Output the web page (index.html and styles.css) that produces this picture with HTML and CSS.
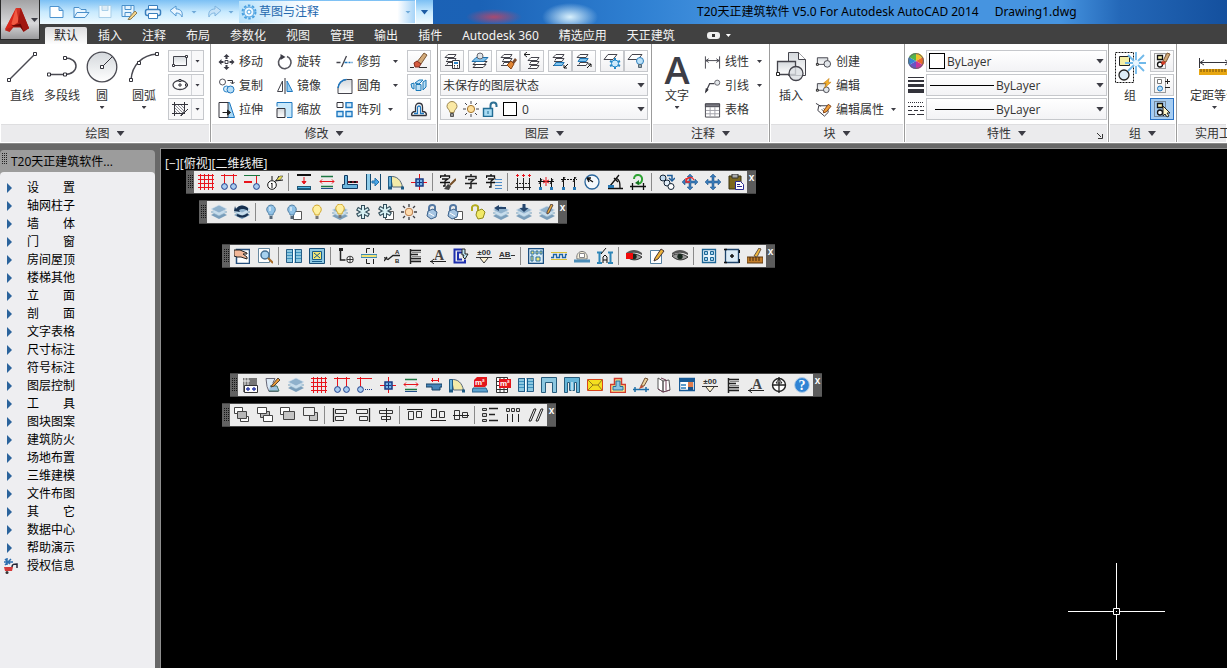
FILE: index.html
```html
<!DOCTYPE html>
<html lang="zh-CN">
<head>
<meta charset="utf-8">
<title>T20天正建筑软件 V5.0</title>
<link rel="stylesheet" href="styles.css">
</head>
<body>
<svg class="sprite" aria-hidden="true">
<defs>
<linearGradient id="gMetal" x1="0" y1="0" x2="0" y2="1"><stop offset="0" stop-color="#d4d8dc"/><stop offset="1" stop-color="#fff"/></linearGradient>
<linearGradient id="gBlue" x1="0" y1="0" x2="0" y2="1"><stop offset="0" stop-color="#d8effc"/><stop offset="1" stop-color="#8cc4e8"/></linearGradient>
<linearGradient id="gRed" x1="0" y1="0" x2="1" y2="1"><stop offset="0" stop-color="#ee4030"/><stop offset="1" stop-color="#8c0c08"/></linearGradient>
</defs>
<symbol id="dn" viewBox="0 0 7 4"><path d="M0 0h7L3.500 4z" fill="#3c3c44"/></symbol>
<!-- quick access -->
<symbol id="q-new" viewBox="0 0 18 16"><path d="M2 2.500h9l4 4v7H2zM11 2.500v4h4" fill="#fff" stroke="#4d93cf"/></symbol>
<symbol id="q-open" viewBox="0 0 18 16"><path d="M2 13.500V3.500h5l2 2h5v3M2 13.500l3-5h12l-4 5z" fill="#e9f6ff" stroke="#4a8fca"/></symbol>
<symbol id="q-save" viewBox="0 0 18 16"><path d="M3 1.500h12v12H3z" fill="#f4fbff" stroke="#a9cfe9"/><path d="M6 1.500h6v5H6z" fill="#dcebf5" stroke="#a9cfe9"/></symbol>
<symbol id="q-saveas" viewBox="0 0 18 16"><path d="M2 1.500h12v11H2zM5 1.500h6v4H5zM5 8.500h6v4H5z" fill="#e6f5ff" stroke="#4a90cb"/><path d="M9 14l6-7 2 2-6 6-3 1z" fill="#f4d58b" stroke="#8c7a52"/></symbol>
<symbol id="q-print" viewBox="0 0 18 16"><path d="M4.500 1.500h9v4h-9z" fill="#fff" stroke="#3a7fbd"/><rect x="1.500" y="5.500" width="15" height="6" rx="2" fill="#e4f2ff" stroke="#3a7fbd" stroke-width="1.500"/><path d="M4.500 9.500h9v5h-9z" fill="#fff" stroke="#3a7fbd"/></symbol>
<symbol id="q-undo" viewBox="0 0 18 16"><path d="M2 6.500L8 2v3c5 0 7 3 6 8-1-2-2-4-6-4v3z" fill="#e8f5ff" stroke="#5398d2"/></symbol>
<symbol id="q-redo" viewBox="0 0 18 16"><path d="M16 6.500L10 2v3c-5 0-7 3-6 8 1-2 2-4 6-4v3z" fill="#c4e1f7" stroke="#7fb4df"/></symbol>
<symbol id="q-gear" viewBox="0 0 16 16"><circle cx="8" cy="8" r="6.500" fill="none" stroke="#4aa0e0" stroke-width="2" stroke-dasharray="2.500 1.600"/><circle cx="8" cy="8" r="5" fill="#eaf6ff" stroke="#4aa0e0"/><circle cx="8" cy="8" r="2" fill="#fff" stroke="#4aa0e0"/></symbol>
<symbol id="logo" viewBox="0 0 28 30"><path d="M13 2h5l9 22-6 4-3-5H10l-4 5-5-2z" fill="url(#gRed)"/><path d="M13 2L1 25l9-3 5-5z" fill="#d8281c"/><path d="M13 2l3 15-6 4-2-2z" fill="#f15a42"/><path d="M18 2l-3 15 6 9 6-2z" fill="#a11610"/><path d="M8 21l10-2 3 8-4-5h-7z" fill="#6a0805"/></symbol>
<!-- draw -->
<symbol id="r-line" viewBox="0 0 32 32"><path d="M3 29L29 3" stroke="#4a4a52" stroke-width="1.500"/><path d="M1.500 27.500h3v3h-3zM27.500 1.500h3v3h-3z" fill="#fff" stroke="#33333b"/></symbol>
<symbol id="r-pline" viewBox="0 0 32 32"><path d="M3 23.500h16c7 0 11-4 11-8.500s-4-8-11-8" fill="none" stroke="#4a4a52" stroke-width="1.500"/><path d="M1.500 22h3v3h-3zM17.500 22h3v3h-3zM17.500 5.500h3v3h-3z" fill="#fff" stroke="#33333b"/></symbol>
<symbol id="r-circle" viewBox="0 0 32 32"><circle cx="16" cy="16" r="14.800" fill="url(#gMetal)" stroke="#4a4a52" stroke-width="1.300"/><path d="M16 16L26 6" stroke="#33333b"/><path d="M14.500 14.500h3v3h-3z" fill="#fff" stroke="#33333b"/></symbol>
<symbol id="r-arc" viewBox="0 0 32 32"><path d="M3 29C4 14 14 4 29 3" fill="none" stroke="#4a4a52" stroke-width="1.500"/><path d="M1.500 27.500h3v3h-3zM27.500 1.500h3v3h-3zM9.500 10.500h3v3h-3z" fill="#fff" stroke="#33333b"/></symbol>
<symbol id="r-rect" viewBox="0 0 18 16"><path d="M2.500 3.500h13v9h-13z" fill="url(#gMetal)" stroke="#44444c"/><path d="M1.500 11.500h2v2h-2zM14.500 2.500h2v2h-2z" fill="#fff" stroke="#33333b"/></symbol>
<symbol id="r-ellipse" viewBox="0 0 18 16"><ellipse cx="9" cy="8" rx="7" ry="4.500" fill="#fff" stroke="#44444c" stroke-width="1.300"/><path d="M9 6v4M7 8h4M8 2.500h2v2H8zM14.500 7h2v2h-2z" fill="#fff" stroke="#33333b"/></symbol>
<symbol id="r-hatch" viewBox="0 0 18 16"><path d="M4 4l8 8M7 4l6 6M10 4l3 3M4 7l6 6M4 10l3 3" stroke="#8a8a92"/><path d="M1 3.500h16M1 12.500h13M3.500 1v14M13.500 1v9l-4 5M17 8l-7 7" fill="none" stroke="#33333b"/></symbol>
<!-- modify -->
<symbol id="m-move" viewBox="0 0 16 16"><path d="M8 0l3 3H9v2H7V3H5zM8 16l-3-3h2v-2h2v2h2zM0 8l3-3v2h2v2H3v2zM16 8l-3 3V9h-2V7h2V5z" fill="#3c3c46"/><path d="M6.500 6.500h3v3h-3z" fill="none" stroke="#3c3c46"/></symbol>
<symbol id="m-rot" viewBox="0 0 16 16"><path d="M5 3A6.300 6.300 0 1 0 10.500 2.500" fill="none" stroke="#55555d" stroke-width="1.600"/><path d="M7 0v6l-5-3z" fill="#3c3c46" transform="rotate(180 5.500 3)"/></symbol>
<symbol id="m-trim" viewBox="0 0 16 16"><path d="M0 8.500h4M5 13l5-11" stroke="#44444c" stroke-width="1.300"/><path d="M8 8.500h3M12 8.500h2M15 8.500h1" stroke="#1f78c0" stroke-width="1.500"/></symbol>
<symbol id="m-copy" viewBox="0 0 16 16"><circle cx="4" cy="4" r="3" fill="#fff" stroke="#55555d"/><path d="M9 2.500h5v3M12 4l2 2 2-2" fill="none" stroke="#33333b"/><circle cx="8" cy="11" r="3" fill="#d5ecfb" stroke="#2f86c8"/><circle cx="12" cy="11.500" r="3.500" fill="#b8def7" stroke="#1f78c0"/></symbol>
<symbol id="m-mirror" viewBox="0 0 16 16"><path d="M6 3v10.500H1z" fill="#fff" stroke="#44444c"/><path d="M8.500 0v16" stroke="#33333b"/><path d="M10.500 3v10.500H16z" fill="#9cd0f2" stroke="#1f78c0"/></symbol>
<symbol id="m-fillet" viewBox="0 0 16 16"><path d="M1.500 15.500V10A9 9 0 0 1 10 1.500h5.500v14z" fill="url(#gMetal)" stroke="#44444c"/><path d="M1.500 10A9 9 0 0 1 10 1.500" fill="none" stroke="#1f78c0" stroke-width="1.500"/></symbol>
<symbol id="m-stretch" viewBox="0 0 16 16"><path d="M9 .500h2l5 15H9z" fill="#a9d8f5" stroke="#1f78c0"/><path d="M.500.500h9v15h-9z" fill="#fff" stroke="#33333b"/><path d="M4 10.500h5M9 8l3 2.500L9 13z" fill="#222" stroke="#222"/></symbol>
<symbol id="m-scale" viewBox="0 0 16 16"><path d="M.500 4.500v-4h15v15h-5" fill="#c8e8fb" stroke="#1f78c0"/><path d="M.500 6.500h8v9h-8z" fill="url(#gMetal)" stroke="#33333b"/></symbol>
<symbol id="m-array" viewBox="0 0 16 16"><path d="M.500.500h6v5h-6z" fill="#fff" stroke="#33333b"/><path d="M9.500.500h6v5h-6zM.500 9.500h6v5h-6zM9.500 9.500h6v5h-6z" fill="#d5edfc" stroke="#1f78c0" stroke-width="1.400"/></symbol>
<symbol id="m-erase" viewBox="0 0 18 16"><path d="M7 9l7-9 3 2-6 9z" fill="#d3aa79" stroke="#7b5836"/><path d="M4 10l3-2 4 3-2 3H5z" fill="#d65a3e" stroke="#832d20"/><path d="M0 14.500h4M9 14.500h8" stroke="#333"/></symbol>
<symbol id="m-explode" viewBox="0 0 18 16"><path d="M5 6l4-3h4L9 7zM6 7.500h5v6H6zM13 5l3-2v7l-3 3zM1 7l3-1v6l-2-1z" fill="#bde0f6" stroke="#1878b8"/></symbol>
<symbol id="m-offset" viewBox="0 0 18 16"><path d="M1.500 14.500h15M1.500 14.500c0-3 1-4 4-4V6c0-5 7-5 7 0v4.500c3 0 4 1 4 4" fill="#fff" stroke="#33333b" stroke-width="1.300"/><path d="M4 12.500h3.500V6.500c0-2 3-2 3 0v6H14" fill="none" stroke="#1f78c0" stroke-width="1.300"/></symbol>
<!-- layers -->
<symbol id="l-st" viewBox="0 0 18 18"><path d="M5 2.500h8l-2 3H2zM4 8.500l1-2h8l-2 3H3M4 12.500l1-2h8l-2 3H2" fill="#fff" stroke="#44444c"/></symbol>
<symbol id="l-prop" viewBox="0 0 18 18"><use href="#l-st"/><path d="M9.500 8.500h7v8h-7z" fill="#fff" stroke="#33333b"/><path d="M11 10h4v2h-4z" fill="#2f86c8"/><path d="M11 13.500h1M14 13.500h1M11 15h1M14 15h1" stroke="#333"/></symbol>
<symbol id="l-cur" viewBox="0 0 18 18"><path d="M5 12.500h10l-3 3H2zM5 9.500h11l-3 3H2z" fill="#fff" stroke="#33333b"/><path d="M5 5.500h12l-4 4H1z" fill="#7fc0ea" stroke="#1f6faa"/><circle cx="9" cy="4" r="3" fill="#dfe4e8" stroke="#66666e"/></symbol>
<symbol id="l-match" viewBox="0 0 18 18"><use href="#l-st"/><path d="M13 10l3-4 2 2-3 4z" fill="#7b4a2c"/><path d="M8 13l4-4 3 3-3 5z" fill="#df8433" stroke="#8b4716"/></symbol>
<symbol id="l-prev" viewBox="0 0 18 18"><use href="#l-st" x="3" y="3"/><path d="M1 2.500h6M4 0L1 2.500 4 5" fill="none" stroke="#222"/></symbol>
<symbol id="l-iso" viewBox="0 0 18 18"><use href="#l-st"/><path d="M3 13.500l2-3h8l-2 3z" fill="#81c3ec" stroke="#1f78b8"/><path d="M17 12l-4 4M13 13v3h3" fill="none" stroke="#111"/></symbol>
<symbol id="l-uniso" viewBox="0 0 18 18"><use href="#l-st"/><path d="M3 9.500l2-3h8l-2 3z" fill="#81c3ec" stroke="#1f78b8"/><path d="M12 16l4-4M13 12h3v3" fill="none" stroke="#111"/></symbol>
<symbol id="l-frz" viewBox="0 0 18 18"><path d="M5 2.500h9l-4 5H1z" fill="#fff" stroke="#44444c"/><path d="M12 6v11M7 9l10 5M17 9L7 14" stroke="#1f86c8" stroke-width="2"/><circle cx="12" cy="11.500" r="3.500" fill="#ceeafb" stroke="#1f86c8"/></symbol>
<symbol id="l-off" viewBox="0 0 18 18"><path d="M5 2.500h10l-4 5H1z" fill="#fff" stroke="#44444c"/><circle cx="13" cy="9" r="3.500" fill="#bce2fa" stroke="#2f80bc"/><path d="M11.500 12.500h3v3h-3z" fill="#9aa" stroke="#567"/></symbol>
<symbol id="l-bulb" viewBox="0 0 16 16"><path d="M8 .500a5 5 0 0 1 5 5c0 2-3 3.500-3 6H6c0-2.500-3-4-3-6a5 5 0 0 1 5-5z" fill="#fbe9a4" stroke="#9b8550"/><path d="M6.500 12.500h3v3h-3z" fill="#999" stroke="#555"/></symbol>
<symbol id="l-sun" viewBox="0 0 16 16"><path d="M8 0v3M8 13v3M0 8h3M13 8h3M2 2l2 2M12 12l2 2M14 2l-2 2M4 12l-2 2" stroke="#44444c"/><circle cx="8" cy="8" r="3.600" fill="#ffdf9b" stroke="#a4752d"/></symbol>
<symbol id="l-lock" viewBox="0 0 16 16"><path d="M8.500 7V4.500c0-4 6-4 6 0V6" fill="none" stroke="#2d6f93" stroke-width="2"/><path d="M1.500 7.500h9v8h-9z" fill="#a9dbf3" stroke="#216c94" stroke-width="1.400"/><path d="M6 10v3" stroke="#216c94"/></symbol>
<!-- annotation, block -->
<symbol id="a-lin" viewBox="0 0 18 16"><path d="M1.500 2v13M16.500 2v13M2 6.500h14M5 4.500L2 6.500l3 2M13 4.500l3 2-3 2" fill="none" stroke="#44444c"/></symbol>
<symbol id="a-lead" viewBox="0 0 18 16"><path d="M2 14L6 5.500h5" fill="none" stroke="#44444c" stroke-width="1.300"/><path d="M1 16l1-6 3 2z" fill="#33333b"/><circle cx="14" cy="4.500" r="2.700" fill="#e3e7ea" stroke="#66666e"/></symbol>
<symbol id="a-table" viewBox="0 0 18 16"><path d="M1.500 1.500h15v14h-15z" fill="#fff" stroke="#44444c"/><path d="M1.500 1.500h15v3h-15z" fill="#7a7a82" stroke="#44444c"/><path d="M2 8.500h14M2 12h14M6.500 5v10M11.500 5v10" stroke="#a0a0a8"/></symbol>
<symbol id="b-ins" viewBox="0 0 32 32"><path d="M13.500 1.500h10l7 7v16h-17z" fill="url(#gMetal)" stroke="#44444c"/><path d="M23.500 1.500v7h7" fill="#fff" stroke="#44444c"/><path d="M2.500 10.500h18v13h-18z" fill="url(#gMetal)" stroke="#44444c" stroke-width="1.300"/><circle cx="21" cy="22.500" r="7" fill="#dce0e4" fill-opacity=".8" stroke="#44444c" stroke-width="1.300"/><path d="M1.500 21.500h3v3h-3z" fill="#fff" stroke="#222"/></symbol>
<symbol id="b-new" viewBox="0 0 18 16"><path d="M2.500 3.500h11v7h-11z" fill="url(#gMetal)" stroke="#44444c"/><circle cx="13" cy="10" r="3.500" fill="#e2e6ea" stroke="#44444c"/><path d="M1.500 9.500h2v2h-2z" fill="#fff" stroke="#222"/></symbol>
<symbol id="b-edit" viewBox="0 0 18 16"><path d="M2.500 5.500h9v7h-9z" fill="url(#gMetal)" stroke="#44444c"/><circle cx="12" cy="12" r="3" fill="#e2e6ea" stroke="#44444c"/><path d="M1.500 11.500h2v2h-2z" fill="#fff" stroke="#222"/><path d="M15 0l-6 5h3l-2 5 7-6h-3z" fill="#f7b32b" stroke="#c07a14" stroke-width=".6"/></symbol>
<symbol id="b-attr" viewBox="0 0 18 16"><path d="M1 1l5 3M4 3.500h9l1 7-4 4-7-6z" fill="#fff" stroke="#33333b"/><path d="M7 7l3 4M9 6l3 4" stroke="#777"/><path d="M9 9l5-7 3 2-5 6-3 1z" fill="#f0a03a" stroke="#7c3f18"/></symbol>
<!-- properties, groups, utilities -->
<symbol id="p-wheel" viewBox="0 0 16 16"><path d="M8 8V0a8 8 0 0 1 7 4z" fill="#f0c22c"/><path d="M8 8l7-4a8 8 0 0 1 0 8z" fill="#ea6b2a"/><path d="M8 8l7 4a8 8 0 0 1-7 4z" fill="#c8379a"/><path d="M8 8v8a8 8 0 0 1-7-4z" fill="#6a52c4"/><path d="M8 8l-7 4a8 8 0 0 1 0-8z" fill="#3487d4"/><path d="M8 8L1 4a8 8 0 0 1 7-4z" fill="#55b748"/><circle cx="8" cy="8" r="7.400" fill="none" stroke="#666"/></symbol>
<symbol id="p-weight" viewBox="0 0 16 16"><path d="M0 .500h16" stroke="#33333b"/><path d="M0 4h16" stroke="#33333b" stroke-width="2"/><path d="M0 8.500h16" stroke="#33333b" stroke-width="3"/><path d="M0 14h16" stroke="#33333b" stroke-width="4"/></symbol>
<symbol id="p-type" viewBox="0 0 16 16"><path d="M0 1.500h16" stroke="#33333b" stroke-dasharray="1 1"/><path d="M0 5.500h16" stroke="#33333b" stroke-dasharray="2 1"/><path d="M0 9.500h16" stroke="#33333b" stroke-dasharray="4 2"/><path d="M0 13.500h16" stroke="#33333b" stroke-dasharray="7 2"/></symbol>
<symbol id="g-group" viewBox="0 0 32 32"><path d="M1.500 1.500h18v30h-18z" fill="#fff" stroke="#111" stroke-dasharray="2 1"/><path d="M5.500 5.500h10v9h-10z" fill="#f6efa4" stroke="#222"/><path d="M22 1v22M11 12h21M14 4l16 16M30 4L14 20" stroke="#70b9ea" stroke-width="1.800"/><circle cx="22" cy="12" r="3" fill="#e8f6ff"/><circle cx="10" cy="24" r="5" fill="#dcecf8" stroke="#222" stroke-width="1.300"/></symbol>
<symbol id="g-box" viewBox="0 0 18 18"><path d="M1.500 1.500h11v15h-11z" fill="none" stroke="#444" stroke-dasharray="1 1"/><path d="M4.500 3.500h5v4h-5z" fill="#f7f1ae" stroke="#111" stroke-width="1.300"/><circle cx="7" cy="12.500" r="2.500" fill="#fff" stroke="#111" stroke-width="1.300"/></symbol>
<symbol id="g-un" viewBox="0 0 18 18"><use href="#g-box"/><path d="M10 9l4-8 3 1-4 8z" fill="#d3aa79" stroke="#7b5836"/><path d="M9 9l4 1-2 3-3-1z" fill="#d03a24"/></symbol>
<symbol id="g-edit" viewBox="0 0 18 18"><path d="M1.500 1.500h11v15h-11z" fill="none" stroke="#444" stroke-dasharray="1 1"/><path d="M4.500 3.500h4v4h-4z" fill="#fff" stroke="#777"/><circle cx="7" cy="12.500" r="2.500" fill="#b9dff7" stroke="#1f78c0"/><path d="M12 5.500h5M14.500 3v5M12 11.500h5" stroke="#222"/></symbol>
<symbol id="g-sel" viewBox="0 0 18 18"><use href="#g-box"/><path d="M10 6v10l2-2 2 3 2-1-2-3h3z" fill="#fff7c9" stroke="#222"/></symbol>
<symbol id="u-meas" viewBox="0 0 64 32"><path d="M.500 7v10M30.500 7v10M1 11.500h29M5 9l-4 2.500L5 14M26 9l4 2.500-4 2.500" fill="none" stroke="#33333b"/><path d="M0 18h32v6H0z" fill="#e8a712"/><path d="M2 18v3M5 18v3M8 18v3M11 18v3M14 18v3M17 18v3M20 18v3M23 18v3M26 18v3M29 18v3" stroke="#744d05"/></symbol>
<!-- floating toolbars -->
<symbol id="t-grid" viewBox="0 0 16 16"><path d="M2.500 0v16M6.500 0v16M10.500 0v16M14.500 0v16M0 1.500h16M0 5.500h16M0 9.500h16M0 13.500h16" stroke="#e8141c"/></symbol>
<symbol id="t-ax2" viewBox="0 0 16 16"><path d="M0 1.500h16" stroke="#e8141c"/><path d="M3.500 0v10M12.500 0v10" stroke="#e8141c"/><circle cx="3.500" cy="12.500" r="2.900" fill="#a8ccf0" stroke="#20408c"/><circle cx="12.500" cy="12.500" r="2.900" fill="#a8ccf0" stroke="#20408c"/></symbol>
<symbol id="t-ax1" viewBox="0 0 16 16"><path d="M0 1.500h16" stroke="#1c7840"/><path d="M12.500 2v8" stroke="#e8141c"/><path d="M0 8h8" stroke="#e8141c" stroke-width="2"/><circle cx="12.500" cy="12.500" r="2.900" fill="#a8ccf0" stroke="#20408c"/></symbol>
<symbol id="t-axd" viewBox="0 0 16 16"><path d="M0 1.500h15M3.500 0v10" stroke="#e8141c"/><circle cx="3.500" cy="12.500" r="2.900" fill="#a8ccf0" stroke="#20408c"/><path d="M8 12.500h8" stroke="#20408c" stroke-dasharray="1 1"/></symbol>
<symbol id="t-axn" viewBox="0 0 16 16"><circle cx="5" cy="11" r="4.300" fill="#fff" stroke="#111"/><path d="M5 9v5M4 10l1-1M5 6V2M8 7l8-1M9 7l3-5" stroke="#111"/><path d="M9 6l4-4h3l-3 4z" fill="#e9df52" stroke="#444" stroke-width=".6"/></symbol>
<symbol id="t-w1" viewBox="0 0 16 16"><path d="M1 1h14" stroke="#111" stroke-width="2"/><path d="M1 14h14" stroke="#1e5878" stroke-width="4"/><path d="M2 13.500h12" stroke="#52b4e4"/><path d="M8 3v5M6 7.500h4L8 10z" fill="#e8141c" stroke="#e8141c"/></symbol>
<symbol id="t-w2" viewBox="0 0 16 16"><path d="M2 2.500h12M2 12.500h12" stroke="#1f7844" stroke-width="1.500"/><path d="M2 14.500h12" stroke="#234f8c"/><path d="M1 7.500h14M3 5.500l-2 2 2 2M13 5.500l2 2-2 2" fill="none" stroke="#e8141c"/></symbol>
<symbol id="t-w3" viewBox="0 0 16 16"><path d="M.500 14.500h15v-4H5.500v-9h-3v9h-2z" fill="#6bb5dd" stroke="#123b62"/><path d="M6 8h10" stroke="#111" stroke-width="2"/><path d="M6 8h10" stroke="#d24" stroke-dasharray="2 2"/></symbol>
<symbol id="t-w4" viewBox="0 0 16 16"><path d="M1 0v16h4V0z" fill="#8fcdea"/><path d="M1.500 0v16M5.500 0v16M15.500 0v16" stroke="#184a6d"/><path d="M7 7h3V4l4 4-4 4V9H7z" fill="#4aa5e6" stroke="#2473ab"/></symbol>
<symbol id="t-fan" viewBox="0 0 16 16"><path d="M2.500 2.500C9 2 13 6 14.500 13H4.500z" fill="#f4eba8" stroke="#567"/><path d="M.500 2.500h3v11h-3z" fill="#69b1db" stroke="#1d5b84"/><path d="M0 14h4M13 14h3" stroke="#1d5b84" stroke-width="3"/></symbol>
<symbol id="t-col" viewBox="0 0 16 16"><path d="M8.500 0v16M0 8.500h16" stroke="#e8141c"/><path d="M5 5h7v7H5z" fill="#79b8ea" stroke="#193882" stroke-width="1.500"/><path d="M8.500 6v5M6 8.500h5" stroke="#193882"/></symbol>
<symbol id="t-zi" viewBox="0 0 16 16"><path d="M8 0v2M3 5V2.500h10V5M5 5.500h6L8 8v6H6M2 9.500h12" fill="none" stroke="#222" stroke-width="1.500"/></symbol>
<symbol id="t-zib" viewBox="0 0 16 16"><path d="M5 0v2M.500 4V2h9v2M2 5h6L5 7v5H3M0 8.500h10" fill="none" stroke="#111" stroke-width="1.300"/><path d="M16 5l-6 6" stroke="#765028" stroke-width="2"/><path d="M4 15l4-5 3 2-2 4z" fill="#444"/></symbol>
<symbol id="t-zil" viewBox="0 0 16 16"><path d="M5 0v2M.500 4V2h8v2M2 5h6L5 7v6H3M0 8.500h9" fill="none" stroke="#111" stroke-width="1.300"/><path d="M9 5.500h7M9 8.500h7M9 11.500h7M9 14.500h7" stroke="#4d8cc9"/></symbol>
<symbol id="t-d1" viewBox="0 0 16 16"><path d="M0 13.500h16M2.500 4v12M8.500 4v12M14.500 4v12" stroke="#222"/><path d="M1 9.500h15" stroke="#222" stroke-dasharray="2 1"/><path d="M1 1.500h3M7 1.500h3M13 1.500h3M2.500 0v3M8.500 0v3M14.500 0v3" stroke="#e8141c"/></symbol>
<symbol id="t-d2" viewBox="0 0 16 16"><path d="M0 7.500h16M2.500 4v9M13.500 4v9M1 10l3-5M12 10l3-5" stroke="#111"/><path d="M8 3v9M5 6l3 1.500L5 9M11 6L8 7.500 11 9" fill="none" stroke="#e8141c"/><path d="M1 13h3v3H1zM12 13h3v3h-3z" fill="#2a7bb8"/></symbol>
<symbol id="t-d3" viewBox="0 0 16 16"><path d="M2.500 3v10M13.500 3v10M1 8l3-5M12 8l3-5" stroke="#111"/><path d="M0 5.500h16" stroke="#111" stroke-dasharray="2 1"/><path d="M1 13h3v3H1zM12 13h3v3h-3z" fill="#2a7bb8"/></symbol>
<symbol id="t-circ" viewBox="0 0 16 16"><circle cx="8" cy="8" r="7" fill="#f4f8fb" stroke="#2a669c" stroke-width="1.300"/><path d="M3 4l6 4M3 4h4M3 4l2 4" stroke="#111" stroke-width="1.300"/></symbol>
<symbol id="t-ang" viewBox="0 0 16 16"><path d="M1 14.500h15M3 12L12 1M9 4c4 2 4 5 4 10M7 4l4 4" fill="none" stroke="#111" stroke-width="1.300"/><path d="M1 11h6v3H1z" fill="#2978b2"/></symbol>
<symbol id="t-turn" viewBox="0 0 16 16"><path d="M0 12.500h16M2.500 9v7M13.500 9v7" stroke="#111" stroke-width="1.300"/><path d="M4 5C4-1 13 0 12 6c0 3-3 4-5 3" fill="none" stroke="#2fa334" stroke-width="2"/><path d="M9 6v5L5 9z" fill="#167321"/></symbol>
<symbol id="t-copy" viewBox="0 0 16 16"><circle cx="4" cy="4" r="3" fill="#c2daee" stroke="#123"/><circle cx="8" cy="9" r="3" fill="#e3eef8" stroke="#123"/><circle cx="12" cy="12.500" r="3" fill="#fff" stroke="#123"/><path d="M8 1.500h5v4M10 4l3 3 3-3" fill="none" stroke="#1d5c99" stroke-width="1.500"/></symbol>
<symbol id="t-move" viewBox="0 0 16 16"><path d="M8 0l3 3H9v4h4V5l3 3-3 3V9H9v4h2l-3 3-3-3h2V9H3v2L0 8l3-3v2h4V3H5z" fill="#387bb8" stroke="#1b4e84" stroke-width=".5"/></symbol>
<symbol id="t-mover" viewBox="0 0 16 16"><use href="#t-move"/><path d="M4 7c1-4 6-5 8-1M4 4v4h4" fill="none" stroke="#ec2a2a" stroke-width="1.300"/></symbol>
<symbol id="t-paste" viewBox="0 0 16 16"><path d="M1 2h12v13H1z" fill="#7c6820" stroke="#38300f"/><path d="M4 0h6v4H4z" fill="#aaa" stroke="#333"/><path d="M7.500 7.500h5l3 3v5h-8z" fill="#fff" stroke="#2a2a92"/><path d="M9 10.500h3M9 12.500h5" stroke="#2a2a92"/></symbol>
<symbol id="t-lay" viewBox="0 0 16 16"><path d="M0 11l8-4 8 4-8 4z" fill="#7a9ebb"/><path d="M0 8l8-4 8 4-8 4z" fill="#c5dcec" stroke="#88a8c0" stroke-width=".6"/><path d="M0 5l8-4 8 4-8 4z" fill="#8fb1cc" stroke="#dceaf4" stroke-width=".6"/></symbol>
<symbol id="t-layb" viewBox="0 0 16 16"><use href="#t-lay"/><path d="M2 5c3-5 9-4 12-1v3C10 4 7 5 5 6l1 2-6-1 1-5z" fill="#17304f"/><path d="M3 11c4 2 8 2 11-1" fill="none" stroke="#17304f" stroke-width="2"/></symbol>
<symbol id="t-bb" viewBox="0 0 16 16"><path d="M8 1a4.500 4.500 0 0 1 4 6c-1 2-2 2-2 4H6c0-2-1-2-2-4a4.500 4.500 0 0 1 4-6z" fill="#91c2e6" stroke="#5381a6"/><path d="M7 3v4" stroke="#fff"/><path d="M6.500 12h3v3h-3z" fill="#567"/></symbol>
<symbol id="t-sq" viewBox="0 0 16 16"><path d="M7.500 7.500h8v8h-8z" fill="#fff" stroke="#555"/></symbol>
<symbol id="t-bbs" viewBox="0 0 16 16"><use href="#t-sq"/><use href="#t-bb" x="-2"/></symbol>
<symbol id="t-by" viewBox="0 0 16 16"><path d="M8 1a4.500 4.500 0 0 1 4 6c-1 2-2 2-2 4H6c0-2-1-2-2-4a4.500 4.500 0 0 1 4-6z" fill="#fff0a0" stroke="#d1a72d"/><path d="M6.500 12h3v3h-3z" fill="#777"/></symbol>
<symbol id="t-byl" viewBox="0 0 16 16"><use href="#t-lay" y="1"/><use href="#t-by" y="-1"/></symbol>
<symbol id="t-flk" viewBox="0 0 16 16"><path d="M8 1v14M2 4.500l12 7M14 4.500l-12 7" stroke="#344f5c" stroke-width="4"/><path d="M8 2v12M3 5l10 6M13 5L3 11" stroke="#d9f2f5" stroke-width="2"/></symbol>
<symbol id="t-flks" viewBox="0 0 16 16"><use href="#t-sq"/><use href="#t-flk" x="-1" y="-1"/></symbol>
<symbol id="t-sun" viewBox="0 0 16 16"><path d="M8 0v3M8 13v3M0 8h3M13 8h3M2 2l2 2M12 12l2 2M14 2l-2 2M4 12l-2 2" stroke="#3f3f44" stroke-width="1.300"/><circle cx="8" cy="8" r="3.800" fill="#ffdcae" stroke="#b77a4a"/></symbol>
<symbol id="t-lk" viewBox="0 0 16 16"><path d="M5 8V4c0-4 7-4 6 0v4" fill="none" stroke="#5478a2" stroke-width="2"/><path d="M4 7l5-2 4 3-1 5-5 2-4-3z" fill="#a6c5e2" stroke="#3c618a"/><path d="M5 9l5 3" stroke="#fff"/></symbol>
<symbol id="t-lks" viewBox="0 0 16 16"><use href="#t-sq"/><use href="#t-lk" x="-2"/></symbol>
<symbol id="t-ul" viewBox="0 0 16 16"><path d="M2 7V3c1-3 7-2 6 1v4" fill="none" stroke="#b3ab1f" stroke-width="2"/><path d="M7 7l5-2 3 3-2 6-5 1-2-4z" fill="#f1e968" stroke="#918a1b"/></symbol>
<symbol id="t-ll" viewBox="0 0 16 16"><use href="#t-lay" y="1"/><path d="M1 4l5-3v2h7v2H6v2z" fill="#25456c"/></symbol>
<symbol id="t-ld" viewBox="0 0 16 16"><use href="#t-lay" y="1"/><path d="M6.500 0h3v4h3L8 8 3.500 4h3z" fill="#25456c"/></symbol>
<symbol id="t-lp" viewBox="0 0 16 16"><use href="#t-lay" y="1"/><path d="M8 8l4-8 2 1-4 8-2 1z" fill="#eeb13c" stroke="#544"/></symbol>
<symbol id="t-hand" viewBox="0 0 16 16"><path d="M2.500 1.500h13v14h-13z" fill="#fff" stroke="#26507e" stroke-width="1.500"/><path d="M0 2h6l7 3v1H9l4 3v2L7 9H3L0 8z" fill="#f2b899" stroke="#222"/></symbol>
<symbol id="t-find" viewBox="0 0 16 16"><path d="M1.500.500h11v14h-11z" fill="#fff" stroke="#6688a0"/><circle cx="8" cy="7" r="4" fill="#a6d1ef" stroke="#456f92" stroke-width="1.500"/><path d="M11 10l5 5" stroke="#a86b25" stroke-width="2"/></symbol>
<symbol id="t-dr2" viewBox="0 0 16 16"><path d="M.500 1.500h15v13H.500z" fill="#8cc7e0" stroke="#285f86"/><path d="M7.500 1v14" stroke="#fff" stroke-width="2"/><path d="M6.500 1v14M9.500 1v14" stroke="#185d8c"/><path d="M1 4.500h5M10 4.500h5M1 7.500h5M10 7.500h5M1 10.500h5M10 10.500h5" stroke="#3f93bf"/></symbol>
<symbol id="t-elev" viewBox="0 0 16 16"><path d="M.500.500h15v15H.500z" fill="#8ec9e2" stroke="#174e77"/><path d="M3.500 3.500h9v8h-9z" fill="#f2e574" stroke="#185d8c"/><path d="M5 5l6 5M11 5l-6 5M3 13.500h10" stroke="#185d8c"/></symbol>
<symbol id="t-node" viewBox="0 0 16 16"><path d="M2.500 3v9h5" fill="none" stroke="#222" stroke-width="1.500"/><path d="M1 0h4v3H1z" fill="#222"/><circle cx="12" cy="11.500" r="3.300" fill="#fff" stroke="#333"/><path d="M9 11.500h6M12 9v5" stroke="#333"/></symbol>
<symbol id="t-cut" viewBox="0 0 16 16"><path d="M0 6.500h16v3H0z" fill="#f1e274" stroke="#3b87b4"/><path d="M5.500 5V.500H9M12.500 0v5M5.500 11v4.500H9M12.500 11v5" fill="none" stroke="#222"/></symbol>
<symbol id="t-rows" viewBox="0 0 16 16"><path d="M3.500 1v15M3 2.500h11M3 6.500h8M3 10.500h11M3 13.500h11" stroke="#222" stroke-width="1.500"/><path d="M5 4.500h9M5 8.500h9M5 12h9" stroke="#888"/></symbol>
<symbol id="t-imp" viewBox="0 0 16 16"><path d="M9 1.500H1.500v13H12v-3M9 4.500H5v7h4" fill="none" stroke="#1d2fae" stroke-width="2"/><path d="M9 1h3v5h3l-3 5-2-2 1-2H9z" fill="#bce6f4" stroke="#222"/></symbol>
<symbol id="t-plan" viewBox="0 0 16 16"><path d="M.500.500h15v15H.500z" fill="#d8ebf5" stroke="#1a4e80" stroke-width="1.500"/><path d="M3 3h3v3H3zM8 3h2v3H8zM12 3h2v3h-2zM3 8h2v5H3zM8 9h4v4H8z" fill="#f3e77a" stroke="#246ca3"/></symbol>
<symbol id="t-wave" viewBox="0 0 16 16"><path d="M0 4.500h16M0 11.500h16" stroke="#d7c13c"/><path d="M0 9.500h2.500v-3h3v3h3v-3h3v3h3v-3H16" fill="none" stroke="#1c64a8" stroke-width="1.300"/></symbol>
<symbol id="t-basin" viewBox="0 0 16 16"><path d="M3 11C1 1 15 1 13 11z" fill="#f6f1dc" stroke="#777"/><path d="M5.500 5.500h5v4h-5z" fill="#fff" stroke="#888"/><path d="M0 13h16" stroke="#4b8db8" stroke-width="3"/></symbol>
<symbol id="t-sec" viewBox="0 0 16 16"><path d="M2.500 16V5M0 4.500h5M13.500 16V5M11 4.500h5M0 15h5M11 15h5" stroke="#2e86b8" stroke-width="2"/><path d="M9 0L4 6" stroke="#111"/><path d="M6 15V9l2-2 2 2v6M6 12h4" fill="none" stroke="#111"/></symbol>
<symbol id="t-eye" viewBox="0 0 16 16"><path d="M0 5c5-4 11-4 16 0v2C10 4 6 4 0 7z" fill="#555"/><path d="M0 8c4-3 10-3 16 1-5 4-11 4-16-1z" fill="#999" stroke="#333"/><circle cx="8" cy="8.500" r="2.700" fill="#16261c"/></symbol>
<symbol id="t-reye" viewBox="0 0 16 16"><use href="#t-eye"/><path d="M0 5h7v6H0z" fill="#f00a0a"/></symbol>
<symbol id="t-note" viewBox="0 0 16 16"><path d="M1.500 2.500h11v13h-11z" fill="#fff" stroke="#5580a0"/><path d="M6 10l6-9 3 2-6 8-4 2z" fill="#edb33b" stroke="#433"/></symbol>
<symbol id="t-four" viewBox="0 0 16 16"><path d="M1.500 1.500h13v13h-13z" fill="#e4f2fa" stroke="#1d6696" stroke-width="1.300"/><path d="M3.500 3.500h3v3h-3zM9.500 3.500h3v3h-3zM3.500 9.500h3v3h-3zM9.500 9.500h3v3h-3z" fill="#a7d6ef" stroke="#1d6696"/></symbol>
<symbol id="t-frm" viewBox="0 0 16 16"><path d="M1.500 1.500h13v13h-13z" fill="#dcecf7" stroke="#1f456c" stroke-width="1.300"/><path d="M0 1.500h3M0 14.500h3M15.500 2v3M15.500 11v4M8 6v4M6 8h4" stroke="#111" stroke-width="1.500"/></symbol>
<symbol id="t-rul" viewBox="0 0 16 16"><path d="M0 9h16v6H0z" fill="#c17d2b" stroke="#5f3b12"/><path d="M3 9v4M6 9v4M9 9v4M12 9v4" stroke="#472b0d"/><path d="M7 8l5-8 2 1-4 8z" fill="#f1b83d" stroke="#654"/></symbol>
<symbol id="t-wall" viewBox="0 0 16 16"><path d="M1 1h14v7H7v7H1z" fill="#777"/><path d="M3 1v14M6 1v14M0 4h8" stroke="#eee"/><path d="M2.500 8.500h13v7h-13z" fill="#fff" stroke="#333"/><path d="M4 12h4M6 10v4M10 12h4M12 10v4" stroke="#2938a5" stroke-width="1.300"/></symbol>
<symbol id="t-doc" viewBox="0 0 16 16"><path d="M1 1.500h9l-2 4 5 9H4l-2-5z" fill="#dceaf6" stroke="#667"/><path d="M4 14h10l-2-5H5" fill="#9dc2df" stroke="#476"/><path d="M7 8l6-7 2 2-6 6-3 1z" fill="#e99a35" stroke="#543"/></symbol>
<symbol id="t-beam" viewBox="0 0 16 16"><path d="M0 7h16v3h-2v3H6v-3H0z" fill="#4685b8" stroke="#174064"/><path d="M5 3.500h8M6.500 1v4M12.500 1v4" stroke="#e8141c"/></symbol>
<symbol id="t-dr3" viewBox="0 0 16 16"><path d="M.500.500h15v15h-4v-10h-7v10h-4z" fill="#8cc7e0" stroke="#275c7c"/></symbol>
<symbol id="t-dr4" viewBox="0 0 16 16"><path d="M.500.500h15v15h-3v-10h-2v8h-5v-8h-2v10h-3z" fill="#65b5d8" stroke="#275c7c"/><path d="M8 5v9" stroke="#fff"/></symbol>
<symbol id="t-roof" viewBox="0 0 16 16"><path d="M.500 2.500h15v11H.500z" fill="#f4df1f" stroke="#d8461c"/><path d="M1 3l5 5h5l4-5M1 13l5-5M15 13l-4-5" fill="none" stroke="#94781b"/></symbol>
<symbol id="t-stair" viewBox="0 0 16 16"><path d="M.500 7.500h4v-6h7v6h4v8H.500z" fill="#f7e88c" stroke="#d33a2d" stroke-width="1.500"/><path d="M3 13V9.500h3V4h4v5.500h3V13z" fill="#8dc4e1" stroke="#246e9d"/></symbol>
<symbol id="t-pd" viewBox="0 0 16 16"><path d="M0 12.500h16M2 10v5M13 10v5" stroke="#1e6fa8" stroke-width="1.500"/><path d="M8 9l4-8 3 1-4 7z" fill="#ecd39e" stroke="#6f4f35"/><path d="M6 12l2-4 3 2z" fill="#b94b2f"/></symbol>
<symbol id="t-book" viewBox="0 0 16 16"><path d="M2 1l5 3v11l-5-3zM13 3L7 4v11l7-2z" fill="#fff" stroke="#555"/><path d="M2 12l5 3 7-2M5 1l5 2v10" fill="none" stroke="#724158"/></symbol>
<symbol id="t-mon" viewBox="0 0 16 16"><path d="M.500 1.500h15v12H.500z" fill="#fff" stroke="#185b98" stroke-width="1.500"/><path d="M1 2h14v3H1z" fill="#185b98"/><path d="M2 8h5M2 11h5" stroke="#287bbb" stroke-width="1.500"/><path d="M9 5h5v5H9z" fill="#de7b4c"/><path d="M9 10h5v3H9z" fill="#174f88"/></symbol>
<symbol id="t-cmp" viewBox="0 0 16 16"><circle cx="8" cy="8" r="6.500" fill="#fff" stroke="#222" stroke-width="1.400"/><path d="M8 0v16M1 8h14" stroke="#222" stroke-width="1.300"/><path d="M5 6l3-4 3 4z" fill="none" stroke="#222"/></symbol>
<symbol id="t-s1" viewBox="0 0 16 16"><path d="M.500.500h8v6h-8zM6.500 9.500h8v5h-8z" fill="#fff" stroke="#444"/><path d="M3.500 4.500h9v7h-9z" fill="#b7b7b7" stroke="#444"/></symbol>
<symbol id="t-s2" viewBox="0 0 16 16"><path d="M3.500 4.500h9v6h-9z" fill="#b7b7b7" stroke="#444"/><path d="M.500.500h9v6h-9zM6.500 8.500h9v6h-9z" fill="#fff" stroke="#444"/></symbol>
<symbol id="t-s3" viewBox="0 0 16 16"><path d="M.500.500h9v7h-9z" fill="#fff" stroke="#444"/><path d="M3.500 4.500h11v8h-11z" fill="#c4c4c4" stroke="#444"/></symbol>
<symbol id="t-s4" viewBox="0 0 16 16"><path d="M6.500 5.500h8v8h-8z" fill="#c4c4c4" stroke="#444"/><path d="M.500 .500h11v8h-11z" fill="#eee" stroke="#444"/></symbol>
<symbol id="t-al" viewBox="0 0 16 16"><path d="M1.500 1v14" stroke="#222" stroke-width="1.300"/><path d="M3.500 2.500h11v4h-11zM3.500 9.500h8v4h-8z" fill="#eee" stroke="#333"/></symbol>
<symbol id="t-ar" viewBox="0 0 16 16"><path d="M14.500 1v14" stroke="#222" stroke-width="1.300"/><path d="M1.500 2.500h11v4h-11zM4.500 9.500h8v4h-8z" fill="#eee" stroke="#333"/></symbol>
<symbol id="t-ac" viewBox="0 0 16 16"><path d="M1.500 3.500h13v3h-13zM3.500 9.500h9v3h-9z" fill="#eee" stroke="#333"/><path d="M8.500 1v14" stroke="#222"/></symbol>
<symbol id="t-at" viewBox="0 0 16 16"><path d="M0 2.500h16" stroke="#222"/><path d="M1.500 4.500h5v8h-5zM9.500 4.500h5v6h-5z" fill="#eee" stroke="#333"/></symbol>
<symbol id="t-abt" viewBox="0 0 16 16"><path d="M0 13.500h16" stroke="#222"/><path d="M1.500 2.500h5v8h-5zM9.500 4.500h5v6h-5z" fill="#eee" stroke="#333"/></symbol>
<symbol id="t-am" viewBox="0 0 16 16"><path d="M1.500 3.500h5v9h-5zM9.500 5.500h5v5h-5z" fill="#eee" stroke="#333"/><path d="M0 8.500h16" stroke="#222"/></symbol>
<symbol id="t-l1" viewBox="0 0 16 16"><path d="M.500 1.500h4v2h-4zM.500 6.500h4v3h-4zM.500 12.500h4v2h-4z" fill="#ccc" stroke="#333"/><path d="M7 1.500h9M7 7.500h6M7 13.500h9" stroke="#222" stroke-width="1.300"/></symbol>
<symbol id="t-l2" viewBox="0 0 16 16"><path d="M1.500 1.500h3v3h-3zM6.500 1.500h3v3h-3zM11.500 1.500h3v3h-3z" fill="#ddd" stroke="#333"/><path d="M2.500 7v8M7.500 7v8M13.500 7v8" stroke="#222"/></symbol>
<symbol id="t-l3" viewBox="0 0 16 16"><path d="M1 14L6 2h2L3 14zM8 14l5-12h2l-5 12z" fill="#eee" stroke="#222"/></symbol>
<symbol id="s-lic" viewBox="0 0 16 16"><path d="M4 0v7M1 4h9M2 1l5 5M8 1L2 7" stroke="#2c6fb0" stroke-width="1.500"/><path d="M9 9c0-3 2-3 5-3v4" fill="none" stroke="#223" stroke-width="1.500"/><path d="M1 9h9l-1 4H2z" fill="#d53a3a"/><circle cx="4" cy="14.500" r="1.500" fill="#333"/></symbol>
</svg>

<header class="top">
  <button class="app-btn" aria-label="应用程序菜单"><svg width="26" height="28"><use href="#logo"/></svg><svg width="7" height="4"><use href="#dn"/></svg></button>
  <div class="titlebar">
    <div class="quick">
      <button aria-label="新建"><svg><use href="#q-new"/></svg></button>
      <button aria-label="打开"><svg><use href="#q-open"/></svg></button>
      <button aria-label="保存"><svg><use href="#q-save"/></svg></button>
      <button aria-label="另存为"><svg><use href="#q-saveas"/></svg></button>
      <button aria-label="打印"><svg><use href="#q-print"/></svg></button>
      <button aria-label="放弃"><svg><use href="#q-undo"/></svg></button>
      <i class="tri faint"></i>
      <button aria-label="重做"><svg><use href="#q-redo"/></svg></button>
      <i class="tri faint"></i>
      <label class="workspace"><svg><use href="#q-gear"/></svg><select aria-label="工作空间"><option>草图与注释</option></select><i class="tri faint"></i></label>
      <button class="more" aria-label="自定义快速访问工具栏"><i class="tri"></i></button>
    </div>
    <h1 class="title"><span>T20天正建筑软件 V5.0 For Autodesk AutoCAD 2014</span><span>Drawing1.dwg</span></h1>
  </div>
  <nav class="tabs">
    <button class="on">默认</button><button>插入</button><button>注释</button><button>布局</button><button>参数化</button><button>视图</button><button>管理</button><button>输出</button><button>插件</button><button>Autodesk 360</button><button>精选应用</button><button>天正建筑</button>
    <button class="mini" aria-label="最小化功能区"><span class="pill"></span><i class="tri light"></i></button>
  </nav>
</header>

<section class="ribbon">
  <div class="panel p-draw">
    <div class="content">
      <button class="big w40"><svg><use href="#r-line"/></svg>直线</button>
      <button class="big w40"><svg><use href="#r-pline"/></svg>多段线</button>
      <button class="big w40"><svg><use href="#r-circle"/></svg>圆<i class="tri sm"></i></button>
      <button class="big w44"><svg><use href="#r-arc"/></svg>圆弧<i class="tri sm"></i></button>
      <div class="rows">
        <div class="split"><button aria-label="矩形"><svg><use href="#r-rect"/></svg></button><button aria-label="矩形选项"><i class="tri sm"></i></button></div>
        <div class="split"><button aria-label="椭圆"><svg><use href="#r-ellipse"/></svg></button><button aria-label="椭圆选项"><i class="tri sm"></i></button></div>
        <div class="split"><button aria-label="图案填充"><svg><use href="#r-hatch"/></svg></button><button aria-label="填充选项"><i class="tri sm"></i></button></div>
      </div>
    </div>
    <button class="name">绘图<i class="tri"></i></button>
  </div>
  <div class="panel p-mod">
    <div class="content">
      <div class="rows w58"><button class="cmd"><svg><use href="#m-move"/></svg>移动</button><button class="cmd"><svg><use href="#m-copy"/></svg>复制</button><button class="cmd"><svg><use href="#m-stretch"/></svg>拉伸</button></div>
      <div class="rows w60"><button class="cmd"><svg><use href="#m-rot"/></svg>旋转</button><button class="cmd"><svg><use href="#m-mirror"/></svg>镜像</button><button class="cmd"><svg><use href="#m-scale"/></svg>缩放</button></div>
      <div class="rows w70"><button class="cmd"><svg><use href="#m-trim"/></svg>修剪<i class="tri sm"></i></button><button class="cmd"><svg><use href="#m-fillet"/></svg>圆角<i class="tri sm"></i></button><button class="cmd near"><svg><use href="#m-array"/></svg>阵列<i class="tri sm"></i></button></div>
      <div class="rows"><button class="sq" aria-label="删除"><svg><use href="#m-erase"/></svg></button><button class="sq" aria-label="分解"><svg><use href="#m-explode"/></svg></button><button class="sq" aria-label="偏移"><svg><use href="#m-offset"/></svg></button></div>
    </div>
    <button class="name">修改<i class="tri"></i></button>
  </div>
  <div class="panel p-lay">
    <div class="content rows">
      <div class="strip">
        <button class="sq" aria-label="图层特性"><svg><use href="#l-prop"/></svg></button>
        <button class="sq" aria-label="置为当前"><svg><use href="#l-cur"/></svg></button>
        <div><button class="sq" aria-label="匹配图层"><svg><use href="#l-match"/></svg></button><button class="sq" aria-label="上一个"><svg><use href="#l-prev"/></svg></button></div>
        <div><button class="sq" aria-label="隔离"><svg><use href="#l-iso"/></svg></button><button class="sq" aria-label="取消隔离"><svg><use href="#l-uniso"/></svg></button></div>
        <div><button class="sq" aria-label="冻结"><svg><use href="#l-frz"/></svg></button><button class="sq" aria-label="关闭"><svg><use href="#l-off"/></svg></button></div>
      </div>
      <label class="combo"><select aria-label="图层状态"><option>未保存的图层状态</option></select><i class="tri"></i></label>
      <label class="combo icons"><svg><use href="#l-bulb"/></svg><svg><use href="#l-sun"/></svg><svg><use href="#l-lock"/></svg><span class="swatch sm"></span><select aria-label="图层"><option>0</option></select><i class="tri"></i></label>
    </div>
    <button class="name">图层<i class="tri"></i></button>
  </div>
  <div class="panel p-ann">
    <div class="content">
      <button class="big w48"><span class="letter">A</span>文字<i class="tri sm"></i></button>
      <div class="rows grow"><button class="cmd"><svg><use href="#a-lin"/></svg>线性<i class="tri sm"></i></button><button class="cmd"><svg><use href="#a-lead"/></svg>引线<i class="tri sm"></i></button><button class="cmd"><svg><use href="#a-table"/></svg>表格</button></div>
    </div>
    <button class="name">注释<i class="tri"></i></button>
  </div>
  <div class="panel p-blk">
    <div class="content">
      <button class="big w40"><svg><use href="#b-ins"/></svg>插入</button>
      <div class="rows grow"><button class="cmd"><svg><use href="#b-new"/></svg>创建</button><button class="cmd"><svg><use href="#b-edit"/></svg>编辑</button><button class="cmd"><svg><use href="#b-attr"/></svg>编辑属性<i class="tri sm"></i></button></div>
    </div>
    <button class="name">块<i class="tri"></i></button>
  </div>
  <div class="panel p-prop">
    <div class="content rows">
      <label class="prop"><svg><use href="#p-wheel"/></svg><span class="combo"><span class="swatch"></span><select aria-label="颜色"><option>ByLayer</option></select><i class="tri"></i></span></label>
      <label class="prop"><svg><use href="#p-weight"/></svg><span class="combo"><span class="stroke"></span><select aria-label="线宽"><option>ByLayer</option></select><i class="tri"></i></span></label>
      <label class="prop"><svg><use href="#p-type"/></svg><span class="combo"><span class="stroke type"></span><select aria-label="线型"><option>ByLayer</option></select><i class="tri"></i></span></label>
    </div>
    <button class="name">特性<i class="tri"></i><svg class="launch" width="6" height="6" viewBox="0 0 6 6"><path d="M0 0l4 4M5.500 1v4.500H1" fill="none" stroke="#333"/></svg></button>
  </div>
  <div class="panel p-grp">
    <div class="content">
      <button class="big w36"><svg><use href="#g-group"/></svg>组</button>
      <div class="rows"><button class="sq" aria-label="解除编组"><svg><use href="#g-un"/></svg></button><button class="sq" aria-label="组编辑"><svg><use href="#g-edit"/></svg></button><button class="sq on" aria-label="组选择"><svg><use href="#g-sel"/></svg></button></div>
    </div>
    <button class="name">组<i class="tri"></i></button>
  </div>
  <div class="panel p-util">
    <div class="content"><button class="big"><svg><use href="#u-meas"/></svg>定距等分<i class="tri sm"></i></button></div>
    <button class="name">实用工具</button>
  </div>
</section>

<main class="work">
  <aside class="palette">
    <h2><i class="dots"></i>T20天正建筑软件...</h2>
    <ul>
      <li><a href="#">设　　置</a></li><li><a href="#">轴网柱子</a></li><li><a href="#">墙　　体</a></li><li><a href="#">门　　窗</a></li><li><a href="#">房间屋顶</a></li><li><a href="#">楼梯其他</a></li><li><a href="#">立　　面</a></li><li><a href="#">剖　　面</a></li><li><a href="#">文字表格</a></li><li><a href="#">尺寸标注</a></li><li><a href="#">符号标注</a></li><li><a href="#">图层控制</a></li><li><a href="#">工　　具</a></li><li><a href="#">图块图案</a></li><li><a href="#">建筑防火</a></li><li><a href="#">场地布置</a></li><li><a href="#">三维建模</a></li><li><a href="#">文件布图</a></li><li><a href="#">其　　它</a></li><li><a href="#">数据中心</a></li><li><a href="#">帮助演示</a></li><li class="lic"><a href="#"><svg><use href="#s-lic"/></svg>授权信息</a></li>
    </ul>
  </aside>
  <div class="canvas">
    <p class="view">[−][俯视][二维线框]</p>
    <div class="bar b1"><i class="grip"></i>
      <button><svg><use href="#t-grid"/></svg></button><button><svg><use href="#t-ax2"/></svg></button><button><svg><use href="#t-ax1"/></svg></button><button><svg><use href="#t-axn"/></svg></button><hr>
      <button><svg><use href="#t-w1"/></svg></button><button><svg><use href="#t-w2"/></svg></button><button><svg><use href="#t-w3"/></svg></button><button><svg><use href="#t-w4"/></svg></button><button><svg><use href="#t-fan"/></svg></button><button><svg><use href="#t-col"/></svg></button><hr>
      <button><svg><use href="#t-zib"/></svg></button><button><svg><use href="#t-zi"/></svg></button><button><svg><use href="#t-zil"/></svg></button><hr>
      <button><svg><use href="#t-d1"/></svg></button><button><svg><use href="#t-d2"/></svg></button><button><svg><use href="#t-d3"/></svg></button><button><svg><use href="#t-circ"/></svg></button><button><svg><use href="#t-ang"/></svg></button><button><svg><use href="#t-turn"/></svg></button><hr>
      <button><svg><use href="#t-copy"/></svg></button><button><svg><use href="#t-mover"/></svg></button><button><svg><use href="#t-move"/></svg></button><button><svg><use href="#t-paste"/></svg></button>
      <button class="x">x</button></div>
    <div class="bar b2"><i class="grip"></i>
      <button><svg><use href="#t-lay"/></svg></button><button><svg><use href="#t-layb"/></svg></button><hr>
      <button><svg><use href="#t-bb"/></svg></button><button><svg><use href="#t-bbs"/></svg></button><button><svg><use href="#t-by"/></svg></button><button><svg><use href="#t-byl"/></svg></button><button><svg><use href="#t-flk"/></svg></button><button><svg><use href="#t-flks"/></svg></button><button><svg><use href="#t-sun"/></svg></button><button><svg><use href="#t-lk"/></svg></button><button><svg><use href="#t-lks"/></svg></button><button><svg><use href="#t-ul"/></svg></button><button><svg><use href="#t-ll"/></svg></button><button><svg><use href="#t-ld"/></svg></button><button><svg><use href="#t-lp"/></svg></button>
      <button class="x">x</button></div>
    <div class="bar b3"><i class="grip"></i>
      <button><svg><use href="#t-hand"/></svg></button><button><svg><use href="#t-find"/></svg></button><hr>
      <button><svg><use href="#t-dr2"/></svg></button><button><svg><use href="#t-elev"/></svg></button><hr>
      <button><svg><use href="#t-node"/></svg></button><button><svg><use href="#t-cut"/></svg></button><button><svg viewBox="0 0 16 16"><path d="M0 9.500l4 2 5-4h7M0 13l3-4" fill="none" stroke="#222" stroke-width="1.300"/><text class="g7" x="11" y="6">A</text><text class="g7" x="11" y="15">B</text></svg></button><button><svg><use href="#t-rows"/></svg></button><button><svg viewBox="0 0 16 16"><text class="gA" x="9" y="12" text-anchor="middle">A</text><path d="M0 13.500h16M4 11l-3 2.500L4 16" fill="none" stroke="#222"/></svg></button><button><svg><use href="#t-imp"/></svg></button><button><svg viewBox="0 0 16 16"><text class="g8" x="8" y="7" text-anchor="middle">±00</text><path d="M0 9.500h16M4 10l4 5 4-5" fill="#fff3d2" stroke="#333"/></svg></button><button><svg viewBox="0 0 16 16"><text class="g8" x="0" y="9">AB</text><path d="M0 10.500h12M12 7.500h4" stroke="#333"/></svg></button><hr>
      <button><svg><use href="#t-plan"/></svg></button><button><svg><use href="#t-wave"/></svg></button><button><svg><use href="#t-basin"/></svg></button><button><svg><use href="#t-sec"/></svg></button><hr>
      <button><svg><use href="#t-reye"/></svg></button><button><svg><use href="#t-note"/></svg></button><button><svg><use href="#t-eye"/></svg></button><hr>
      <button><svg><use href="#t-four"/></svg></button><button><svg><use href="#t-frm"/></svg></button><button><svg><use href="#t-rul"/></svg></button>
      <button class="x">x</button></div>
    <div class="bar b4"><i class="grip"></i>
      <button><svg><use href="#t-wall"/></svg></button><button><svg><use href="#t-doc"/></svg></button><button><svg><use href="#t-lay"/></svg></button><button><svg><use href="#t-grid"/></svg></button><button><svg><use href="#t-ax2"/></svg></button><button><svg><use href="#t-axd"/></svg></button><button><svg><use href="#t-col"/></svg></button><button><svg><use href="#t-w2"/></svg></button><button><svg><use href="#t-beam"/></svg></button><button><svg><use href="#t-fan"/></svg></button><button><svg viewBox="0 0 16 16"><path d="M2 3l3-3h10v8l-2 2H2z" fill="#e3161b"/><text class="g8 w" x="3" y="8">m²</text><path d="M1 11h13l2 4H0z" fill="#5ba2cf" stroke="#265e8a"/></svg></button><button><svg viewBox="0 0 16 16"><path d="M1.500.500h11v15h-11zM1 4.500h12M1 8.500h12M1 12.500h12M5 0v16M9 0v16" fill="#fff" stroke="#333"/><path d="M4 2h12v9H4z" fill="#e3161b"/><text class="g8 w" x="5" y="9">m²</text></svg></button><button><svg><use href="#t-dr2"/></svg></button><button><svg><use href="#t-dr3"/></svg></button><button><svg><use href="#t-dr4"/></svg></button><button><svg><use href="#t-roof"/></svg></button><button><svg><use href="#t-stair"/></svg></button><button><svg><use href="#t-pd"/></svg></button><button><svg><use href="#t-book"/></svg></button><button><svg><use href="#t-mon"/></svg></button><button><svg viewBox="0 0 16 16"><text class="g8" x="8" y="7" text-anchor="middle">±00</text><path d="M0 9.500h16M4 10l4 5 4-5" fill="#fff3d2" stroke="#333"/></svg></button><button><svg><use href="#t-rows"/></svg></button><button><svg viewBox="0 0 16 16"><text class="gA" x="9" y="12" text-anchor="middle">A</text><path d="M0 13.500h16M4 11l-3 2.500L4 16" fill="none" stroke="#222"/></svg></button><button><svg><use href="#t-cmp"/></svg></button><button><svg viewBox="0 0 16 16"><circle cx="8" cy="8" r="7.400" fill="#2f83d4" stroke="#b5cde5"/><text class="gA w" x="8" y="13" text-anchor="middle">?</text></svg></button>
      <button class="x">x</button></div>
    <div class="bar b5"><i class="grip"></i>
      <button><svg><use href="#t-s1"/></svg></button><button><svg><use href="#t-s2"/></svg></button><button><svg><use href="#t-s3"/></svg></button><button><svg><use href="#t-s4"/></svg></button><hr>
      <button><svg><use href="#t-al"/></svg></button><button><svg><use href="#t-ar"/></svg></button><button><svg><use href="#t-ac"/></svg></button><hr>
      <button><svg><use href="#t-at"/></svg></button><button><svg><use href="#t-abt"/></svg></button><button><svg><use href="#t-am"/></svg></button><hr>
      <button><svg><use href="#t-l1"/></svg></button><button><svg><use href="#t-l2"/></svg></button><button><svg><use href="#t-l3"/></svg></button>
      <button class="x">x</button></div>
    <svg class="cross" width="97" height="97" viewBox="0 0 97 97"><path d="M0 48.500h45M52 48.500h45M48.500 0v45M48.500 52v45M45.500 45.500h6v6h-6zM48 48.500h1" fill="none" stroke="#fff"/></svg>
  </div>
</main>
</body>
</html>
```
FILE: styles.css
```css
* { box-sizing: border-box; }
body {
  margin: 0;
  height: 100vh;
  display: flex;
  flex-direction: column;
  overflow: hidden;
  background: #686868;
  color: #333;
  font: 12px/16px "Open Sans", "Noto Sans CJK SC", sans-serif;
}
button, select {
  font: inherit;
  color: inherit;
  border: 0;
  padding: 0;
  margin: 0;
  background: none;
}
button { display: flex; align-items: center; justify-content: center; white-space: nowrap; }
select { appearance: none; flex: 1; min-width: 0; outline: 0; }
svg { display: block; flex: none; }
.sprite { position: absolute; width: 0; height: 0; }
.tri {
  flex: none;
  width: 8px;
  height: 5px;
  background: #3c3c44;
  clip-path: polygon(0 0, 100% 0, 50% 100%);
}
.tri.sm { width: 5px; height: 3px; }
.tri.light { width: 5px; height: 3px; background: #fff; }
.tri.faint { width: 6px; height: 3px; background: #6fa9d8; }

/* title and tabs */
.top { display: grid; grid-template-columns: 40px 1fr; grid-template-rows: 24px 20px; background: #414141; flex: none; }
.app-btn {
  grid-row: span 2;
  height: 40px;
  justify-content: flex-start;
  padding-left: 3px;
  gap: 1px;
  border: 1px solid #2a2a2a;
  border-top: 0;
  background: linear-gradient(#a2a2a4, #d8d8da 60%, #9a9a9c);
}
.titlebar {
  display: flex;
  background:
    radial-gradient(ellipse 28px 8px at 454px 17px, #a84a70, transparent),
    radial-gradient(ellipse 28px 14px at 530px 17px, #d8f0fc, transparent),
    linear-gradient(90deg, #1b5eb0, #1b62b6 440px, #2f80d2 600px, #4694e0 700px, #4694e0 1020px, #2468b8 1080px, #14509e);
}
.quick {
  display: flex;
  align-items: center;
  width: 393px;
  padding-left: 5px;
  background: linear-gradient(#7cc0f4, #c8eafe 50%, #eefaff);
}
.quick button { width: 24px; height: 24px; }
.quick button svg { width: 18px; height: 16px; }
.quick > .tri { margin: 0 5px 0 2px; }
.workspace { display: flex; align-items: center; flex: 1; height: 22px; padding: 0 4px 0 2px; gap: 2px; background: linear-gradient(90deg, #b9e2fb, #fff 40%, #fff 90%, #a6d4f8); }
.workspace svg { width: 16px; height: 16px; }
.workspace select { color: #2468ae; }
.quick .more { width: 18px; border-left: 1px solid #fff; }
.more .tri { background: #1c5ca4; }
.title { margin: 0; padding-left: 264px; display: flex; gap: 16px; align-items: center; font: 400 12px/16px "Noto Sans", "Noto Sans CJK SC", sans-serif; color: #000; white-space: nowrap; }
.tabs { display: flex; align-items: flex-end; padding-left: 5px; font-family: "Noto Sans", "Noto Sans CJK SC", sans-serif; }
.tabs button { height: 17px; padding: 0 10px; color: #f4f4f4; }
.tabs .on { color: #222; padding: 0 9px; margin-right: 1px; background: linear-gradient(#dcdcde, #fdfdfd); border-radius: 2px 2px 0 0; }
.tabs .mini { margin-left: 12px; gap: 6px; }
.pill { width: 13px; height: 7px; border-radius: 3px; background: #333; border: solid #eee; border-width: 2px 5px; }

/* ribbon */
.ribbon { display: flex; flex: none; height: 100px; background: #fff; border-bottom: 1px solid #8a8a8a; padding-bottom: 1px; }
.panel { flex: none; display: flex; flex-direction: column; border-right: 1px solid #9c9c9c; padding: 0 1px; overflow: hidden; }
.p-draw { width: 211px; }
.p-mod { width: 227px; }
.p-lay { width: 214px; }
.p-ann { width: 118px; }
.p-blk { width: 135px; }
.p-prop { width: 204px; }
.p-grp { width: 68px; }
.p-util { flex: 1; min-width: 0; border: 0; }
.content { display: flex; height: 80px; padding-top: 5px; }
.name { position: relative; height: 18px; gap: 7px; background: #ebebed; border-top: 1px solid #dedee0; }
.launch { position: absolute; right: 4px; bottom: 3px; }
.p-util .name { justify-content: flex-start; padding-left: 17px; }
.big { flex-direction: column; justify-content: flex-start; padding-top: 2px; height: 72px; }
.big svg { width: 32px; height: 32px; margin-bottom: 5px; }
.big .tri { margin-top: 2px; }
.letter { height: 32px; margin-bottom: 5px; font-size: 38px; line-height: 36px; font-weight: 600; color: #3d3d46; }
.w36 { width: 36px; }
.w40 { width: 40px; }
.w44 { width: 44px; }
.w48 { width: 48px; }
.w58 { width: 58px; }
.w60 { width: 60px; }
.w70 { width: 71px; }
.rows { display: grid; grid-template-rows: repeat(3, 24px); align-items: center; align-content: start; }
.grow { flex: 1; }
.cmd { justify-content: flex-start; gap: 4px; width: 100%; height: 24px; line-height: 18px; padding-top: 1px; }
.cmd svg { width: 17px; height: 16px; }
.cmd .tri { margin-left: auto; margin-right: 9px; }
.near .tri { margin-right: 14px; }
.split { display: flex; width: 36px; height: 22px; border: 1px solid #c6c8cc; background: #f8f8f9; }
.split button:first-child { width: 23px; border-right: 1px solid #d2d4d8; }
.split button:last-child { flex: 1; }
.split svg { width: 18px; height: 16px; }
.sq { width: 24px; height: 22px; border: 1px solid #c6c8cc; background: linear-gradient(#fff, #f0f0f2); }
.sq svg { width: 18px; height: 18px; }
.sq.on { border-color: #2a72c4; background: #a6cdf2; }
.strip { display: flex; gap: 4px; }
.strip div { display: flex; }
.combo { display: flex; align-items: center; flex: 1; height: 22px; min-width: 0; border: 1px solid #c6c8cc; background: linear-gradient(#fff, #f3f3f5); padding: 0 2px; }
.combo.icons { gap: 3px; padding-left: 3px; }
.combo.icons svg { width: 16px; height: 16px; }
.combo select { padding-top: 1px; }
.swatch { width: 16px; height: 16px; flex: none; margin-right: 2px; border: 1px solid #000; background: #fff; }
.swatch.sm { width: 14px; height: 14px; margin-left: 2px; }
.stroke { width: 64px; height: 1px; margin: 0 2px 0 1px; background: #000; }
.stroke.type { width: 59px; margin-left: 6px; }
.prop { display: flex; align-items: center; gap: 2px; }
.prop > svg { width: 16px; height: 16px; }
.p-draw .content { padding-left: 1px; }
.p-draw .rows { margin-left: 2px; }
.p-mod .content { padding-left: 6px; }
.p-lay .content { padding-left: 1px; padding-right: 2px; }
.p-ann .rows { margin-left: 3px; }
.p-ann .cmd .tri { margin-right: 6px; }
.p-blk .rows { margin-left: 4px; }
.p-blk .cmd .tri { margin-right: 7px; }
.p-prop .content { padding-left: 2px; }
.p-grp .content { padding-left: 2px; gap: 2px; }
.p-util .content { padding-left: 12px; }
.p-util .big { align-items: flex-start; }
.p-util .big svg { width: 64px; margin-left: 9px; }
.p-util .tri { margin-left: 22px; }

/* workspace */
.work { flex: 1; display: flex; min-height: 0; padding-top: 4px; }
.palette { width: 155px; margin: 2px 5px 0 0; display: flex; flex-direction: column; background: #9c9c9c; border-radius: 4px 4px 0 0; color: #000; }
.palette h2 { display: flex; gap: 4px; height: 22px; margin: 0; padding: 3px 0 0 2px; font-size: 12px; font-weight: 400; line-height: 18px; }
.dots {
  width: 5px;
  height: 11px;
  background:
    repeating-linear-gradient(90deg, transparent 0 1px, #9c9c9c 1px 2px),
    repeating-linear-gradient(#222 0 1px, #9c9c9c 1px 2px);
}
.palette ul { flex: 1; margin: 0; padding: 7px 0; list-style: none; background: #eeeef1; border-radius: 4px 4px 0 0; }
.palette a { display: flex; align-items: center; height: 18px; padding-left: 7px; color: #000; text-decoration: none; }
.palette a::before { content: ""; width: 5px; height: 10px; margin-right: 15px; background: #2b639c; clip-path: polygon(0 0, 100% 50%, 0 100%); }
.palette .lic a { padding-left: 3px; gap: 8px; }
.palette .lic a::before { display: none; }
.palette .lic svg { width: 16px; height: 16px; }
.canvas { position: relative; flex: 1; overflow: hidden; background: #000; border: solid #8f8f8f; border-width: 1px 0 0 1px; }
.view { margin: 7px 0 0 4px; color: #f2f2f2; }

/* floating toolbars placed freely over the drawing */
.bar { position: absolute; display: flex; height: 24px; background: #ececec; border: solid #464646; border-width: 1px 0; }
.bar button { width: 23px; padding-left: 4px; justify-content: flex-start; }
.bar svg { width: 16px; height: 16px; }
.bar hr { width: 1px; height: 18px; margin: 2px 3px 2px 2px; border: 0; background: #8a8a8a; }
.bar .grip {
  width: 8px;
  border: solid #626262;
  border-width: 4px 1px 5px 2px;
  background:
    repeating-linear-gradient(90deg, transparent 0 1px, #626262 1px 2px),
    repeating-linear-gradient(#161616 0 1px, #626262 1px 2px);
}
.bar .x { width: 9px; padding: 1px 0 0; justify-content: center; align-items: flex-start; background: #5c5c5c; color: #fff; font: bold 10px/11px "Liberation Sans", sans-serif; }
.g7 { font: bold 6px "Liberation Sans", sans-serif; fill: #222; }
.g8 { font: bold 8px "Liberation Sans", sans-serif; fill: #333; }
.gA { font: bold 14px "Liberation Serif", serif; fill: #444; }
.g8.w, .gA.w { fill: #fff; }
.b1 { left: 25px; top: 21px; }
.b2 { left: 38px; top: 51px; }
.b3 { left: 61px; top: 95px; }
.b4 { left: 69px; top: 224px; }
.b5 { left: 61px; top: 254px; }
.cross { position: absolute; left: 907px; top: 414px; }
```
